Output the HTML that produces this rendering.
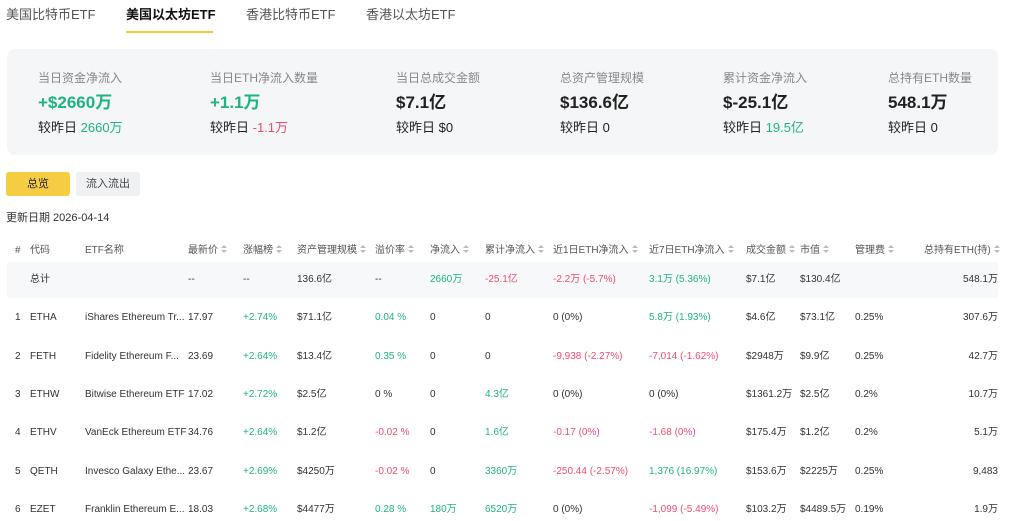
<!DOCTYPE html><html><head><meta charset="utf-8"><style>
*{margin:0;padding:0;box-sizing:border-box}
body{width:1009px;height:521px;overflow:hidden;background:#fff;font-family:"Liberation Sans","Noto Sans CJK SC",sans-serif;color:#222;position:relative}
.a{position:absolute;white-space:nowrap}
.tab{font-size:13px;color:#555;top:6px;line-height:18px}
.card{position:absolute;left:7px;top:49px;width:991px;height:106px;background:#f5f6f8;border-radius:8px}
.lb{font-size:12px;color:#888;top:70px;line-height:16px}
.vl{font-size:17px;font-weight:bold;top:92px;color:#222;line-height:22px}
.sb{font-size:13px;top:119px;color:#222;line-height:18px}
.t{font-size:10px;color:#333;line-height:14px}
.h{font-size:10px;color:#555;top:244px;line-height:14px}
.g{color:#1fb383 !important}.r{color:#ef4c6c !important}
.s{display:inline-block;width:6px;height:9px;margin-left:3px;vertical-align:-1px;position:relative}
.s:before{content:"";position:absolute;left:0;top:0;border:3px solid transparent;border-bottom:3px solid #bbb;border-top:0}
.s:after{content:"";position:absolute;left:0;top:5px;border:3px solid transparent;border-top:3px solid #bbb;border-bottom:0}
</style></head><body>
<div class="a tab" style="left:6px">美国比特币ETF</div>
<div class="a tab" style="left:126px;color:#111;font-weight:bold">美国以太坊ETF</div>
<div class="a" style="left:126px;top:31px;width:87px;height:2px;background:#f0c93e"></div>
<div class="a tab" style="left:246px">香港比特币ETF</div>
<div class="a tab" style="left:366px">香港以太坊ETF</div>
<div class="card"></div>
<div class="a lb" style="left:38px">当日资金净流入</div><div class="a vl g" style="left:38px">+$2660万</div><div class="a sb" style="left:38px">较昨日 <span class="g">2660万</span></div>
<div class="a lb" style="left:210px">当日ETH净流入数量</div><div class="a vl g" style="left:210px">+1.1万</div><div class="a sb" style="left:210px">较昨日 <span class="r">-1.1万</span></div>
<div class="a lb" style="left:396px">当日总成交金额</div><div class="a vl" style="left:396px">$7.1亿</div><div class="a sb" style="left:396px">较昨日 $0</div>
<div class="a lb" style="left:560px">总资产管理规模</div><div class="a vl" style="left:560px">$136.6亿</div><div class="a sb" style="left:560px">较昨日 0</div>
<div class="a lb" style="left:723px">累计资金净流入</div><div class="a vl" style="left:723px">$-25.1亿</div><div class="a sb" style="left:723px">较昨日 <span class="g">19.5亿</span></div>
<div class="a lb" style="left:888px">总持有ETH数量</div><div class="a vl" style="left:888px">548.1万</div><div class="a sb" style="left:888px">较昨日 0</div>
<div class="a" style="left:6px;top:172px;width:64px;height:24px;background:#f5cd45;border-radius:3px;font-size:11px;text-align:center;line-height:24px">总览</div>
<div class="a" style="left:76px;top:172px;width:64px;height:24px;background:#f0f1f3;border-radius:3px;font-size:11px;text-align:center;line-height:24px;color:#444">流入流出</div>
<div class="a" style="left:6px;top:210px;font-size:11px;color:#333;line-height:16px">更新日期 2026-04-14</div>
<div class="a h" style="left:15px">#</div><div class="a h" style="left:30px">代码</div><div class="a h" style="left:85px">ETF名称</div>
<div class="a h" style="left:188px">最新价<i class="s"></i></div><div class="a h" style="left:243px">涨幅榜<i class="s"></i></div><div class="a h" style="left:297px">资产管理规模<i class="s"></i></div><div class="a h" style="left:375px">溢价率<i class="s"></i></div><div class="a h" style="left:430px">净流入<i class="s"></i></div><div class="a h" style="left:485px">累计净流入<i class="s"></i></div><div class="a h" style="left:553px">近1日ETH净流入<i class="s"></i></div><div class="a h" style="left:649px">近7日ETH净流入<i class="s"></i></div><div class="a h" style="left:746px">成交金额<i class="s"></i></div><div class="a h" style="left:800px">市值<i class="s"></i></div><div class="a h" style="left:855px">管理费<i class="s"></i></div><div class="a h" style="left:924px">总持有ETH(持)<i class="s"></i></div>
<div class="a" style="left:7px;top:262px;width:991px;height:36px;background:#f7f8fa"></div>
<div id="rows"></div>
<script>
const X=[15,30,85,188,243,297,375,430,485,553,649,746,800,855];
const R=[
["","总计","","--","--","136.6亿","--","g2660万","r-25.1亿","r-2.2万 (-5.7%)","g3.1万 (5.36%)","$7.1亿","$130.4亿","","548.1万"],
["1","ETHA","iShares Ethereum Tr...","17.97","g+2.74%","$71.1亿","g0.04 %","0","0","0 (0%)","g5.8万 (1.93%)","$4.6亿","$73.1亿","0.25%","307.6万"],
["2","FETH","Fidelity Ethereum F...","23.69","g+2.64%","$13.4亿","g0.35 %","0","0","r-9,938 (-2.27%)","r-7,014 (-1.62%)","$2948万","$9.9亿","0.25%","42.7万"],
["3","ETHW","Bitwise Ethereum ETF","17.02","g+2.72%","$2.5亿","0 %","0","g4.3亿","0 (0%)","0 (0%)","$1361.2万","$2.5亿","0.2%","10.7万"],
["4","ETHV","VanEck Ethereum ETF","34.76","g+2.64%","$1.2亿","r-0.02 %","0","g1.6亿","r-0.17 (0%)","r-1.68 (0%)","$175.4万","$1.2亿","0.2%","5.1万"],
["5","QETH","Invesco Galaxy Ethe...","23.67","g+2.69%","$4250万","r-0.02 %","0","g3360万","r-250.44 (-2.57%)","g1,376 (16.97%)","$153.6万","$2225万","0.25%","9,483"],
["6","EZET","Franklin Ethereum E...","18.03","g+2.68%","$4477万","g0.28 %","g180万","g6520万","0 (0%)","r-1,099 (-5.49%)","$103.2万","$4489.5万","0.19%","1.9万"]];
const T=[273,311,350,388,426,465,503];let h="";
R.forEach((r,i)=>{r.forEach((c,j)=>{let cl="";if(c[0]=="g"||c[0]=="r"){cl=c[0];c=c.slice(1);}
if(j==14)h+=`<div class="a t" style="right:11px;top:${T[i]}px">${c}</div>`;
else h+=`<div class="a t ${cl}" style="left:${X[j]}px;top:${T[i]}px">${c}</div>`;});});
document.getElementById("rows").innerHTML=h;
</script>
</body></html>
